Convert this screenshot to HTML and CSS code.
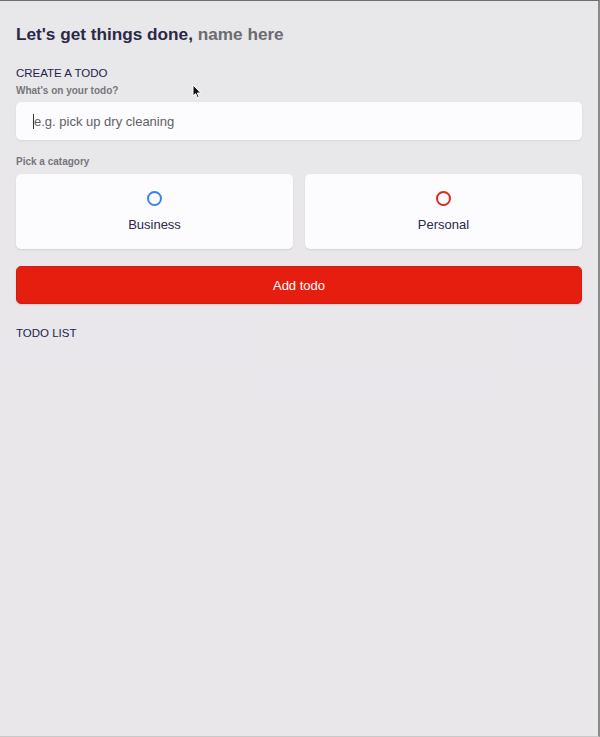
FILE: index.html
```html
<!DOCTYPE html>
<html lang="en">
<head>
<meta charset="utf-8">
<title>Todo</title>
<link rel="stylesheet" href="styles.css">
</head>
<body>
<div class="frame">
  <main class="app">
    <h1 class="greeting">Let's get things done, <span class="name">name here</span></h1>

    <section class="create">
      <h2 class="section-title">CREATE A TODO</h2>
      <label class="field-label">What's on your todo?</label>
      <div class="input-box">
        <span class="caret"></span><span class="placeholder">e.g. pick up dry cleaning</span>
      </div>

      <label class="field-label pick">Pick a catagory</label>
      <div class="options">
        <div class="option">
          <span class="radio radio-business"></span>
          <span class="option-label">Business</span>
        </div>
        <div class="option">
          <span class="radio radio-personal"></span>
          <span class="option-label">Personal</span>
        </div>
      </div>

      <button class="add-btn">Add todo</button>
    </section>

    <section class="list">
      <h2 class="section-title">TODO LIST</h2>
    </section>
  </main>
  <svg class="cursor" width="10" height="15" viewBox="0 0 10 15">
    <path d="M1 1 L1 12 L3.6 9.6 L5.6 14 L7.2 13.3 L5.3 9 L8.8 9 Z" fill="#111" stroke="#fff" stroke-width="1"/>
  </svg>
</div>
</body>
</html>
```

FILE: styles.css
```css
* { box-sizing: border-box; }

html, body {
  margin: 0;
  padding: 0;
  height: 100%;
}

body {
  font-family: "Liberation Sans", Arial, sans-serif;
  background: #e9e7ea;
}

.frame {
  position: relative;
  height: 737px;
  border-top: 1px solid #6e6e6e;
  border-right: 2px solid #8a8a8a;
  border-bottom: 1px solid #c9c9c9;
  background: linear-gradient(#e8e7ea, #eae7eb);
}

.app {
  padding: 22px 16px 0 16px;
  color: #26264a;
}

.greeting {
  margin: 0;
  font-size: 17.2px;
  font-weight: bold;
  color: #2a2948;
  line-height: 22px;
}

.name {
  color: #6c6b71;
}

.create {
  margin-top: 21px;
}

.section-title {
  margin: 0;
  font-size: 11.5px;
  font-weight: normal;
  color: #24244a;
  line-height: 14px;
}

.field-label {
  display: block;
  margin-top: 5px;
  font-size: 10px;
  font-weight: bold;
  color: #77767c;
  line-height: 12px;
}

.input-box {
  margin-top: 5px;
  height: 38px;
  background: #fcfbfe;
  border-radius: 5px;
  box-shadow: 0 1px 2px rgba(0,0,0,0.08);
  display: flex;
  align-items: center;
  padding-left: 17px;
}

.caret {
  width: 1px;
  height: 15px;
  background: #333;
}

.placeholder {
  font-size: 13px;
  color: #616068;
}

.pick {
  margin-top: 16px;
}

.options {
  margin-top: 6px;
  display: grid;
  grid-template-columns: 1fr 1fr;
  gap: 12px;
}

.option {
  height: 75px;
  background: #fcfbfe;
  border-radius: 5px;
  box-shadow: 0 1px 2px rgba(0,0,0,0.1);
  display: flex;
  flex-direction: column;
  align-items: center;
  padding-top: 17px;
}

.radio {
  width: 15px;
  height: 15px;
  border-radius: 50%;
  border: 2px solid #3b82f0;
}

.radio-personal {
  border-color: #e0261d;
}

.option-label {
  margin-top: 11px;
  font-size: 13px;
  color: #2a2945;
}

.add-btn {
  display: block;
  width: 100%;
  margin-top: 17px;
  height: 38px;
  border: 1px solid #d21d12;
  border-radius: 5px;
  background: #e61e10;
  color: #fff;
  font-family: inherit;
  font-size: 13px;
  box-shadow: 0 1px 2px rgba(0,0,0,0.12);
}

.list {
  margin-top: 22px;
}

.cursor {
  position: absolute;
  left: 192px;
  top: 83px;
}
```
